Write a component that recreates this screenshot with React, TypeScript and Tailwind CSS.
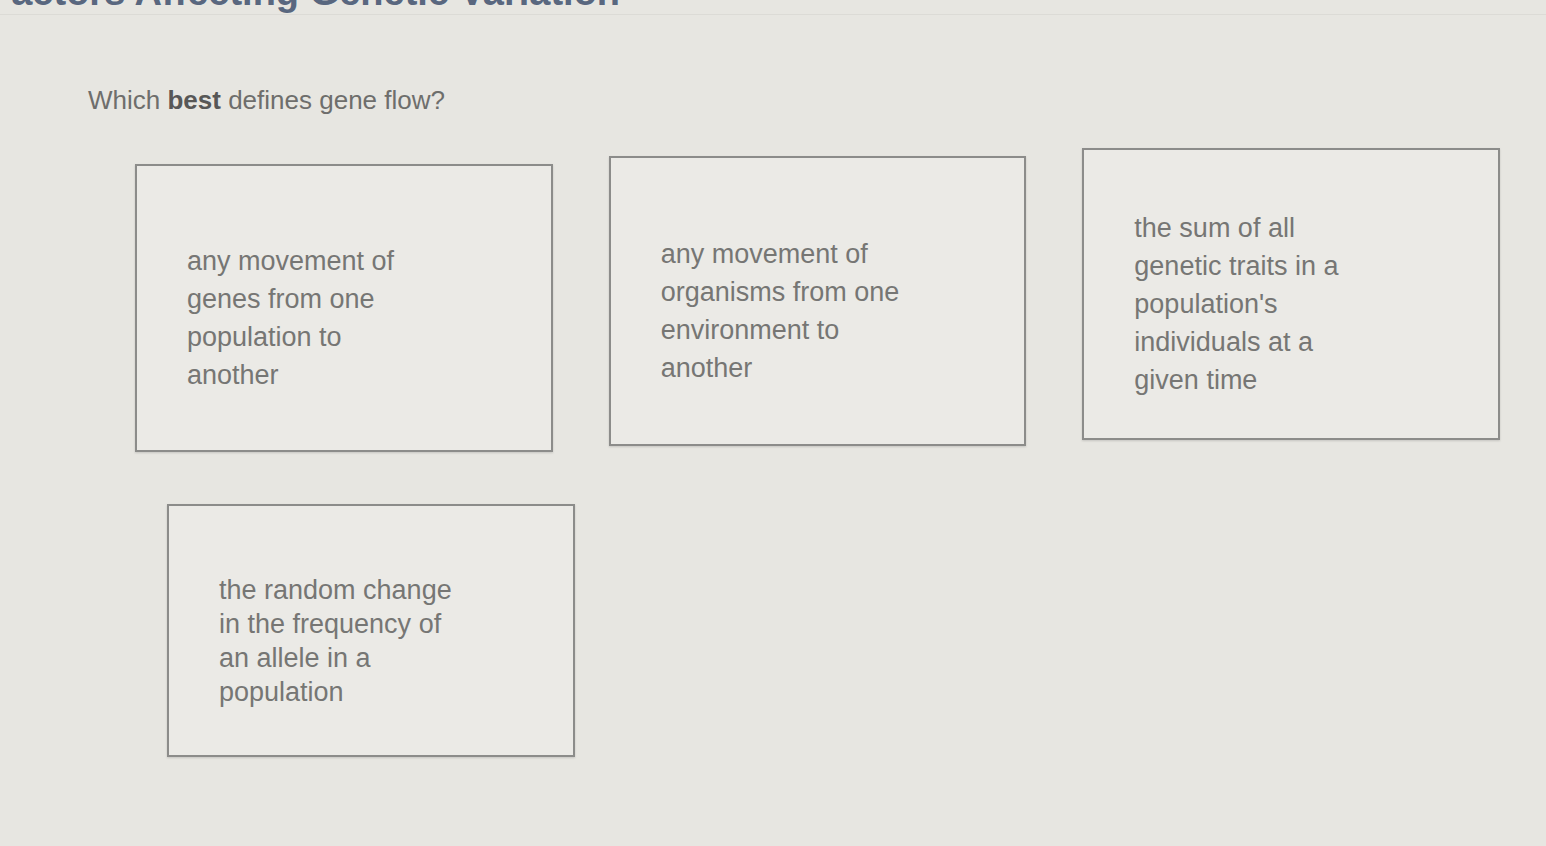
const choices = [
  ["any movement of", "genes from one", "population to", "another"],
  ["any movement of", "organisms from one", "environment to", "another"],
  ["the sum of all", "genetic traits in a", "population's", "individuals at a", "given time"],
  ["the random change", "in the frequency of", "an allele in a", "population"],
];

const Choice = ({ lines, className, leading = "leading-[38px]" }: { lines: string[]; className: string; leading?: string }) => {
  return (
    <button
      className={`flex items-center border-2 border-[#8c8c8a] bg-[#ebeae6] pt-[20px] pl-[50px] text-left shadow-[0_1px_2px_rgba(0,0,0,0.15)] ${className}`}
    >
      <span className={`text-[27px] text-[#767674] ${leading}`}>
        {lines.map((l) => (
          <span key={l} className="block">
            {l}
          </span>
        ))}
      </span>
    </button>
  );
};

export default function App() {
  return (
    <div
      className="h-[846px] w-full overflow-hidden bg-[#e7e6e1]"
      style={{ fontFamily: '"Liberation Sans", Arial, sans-serif' }}
    >
      <div className="flex items-end border-b border-[#dcdbd6]">
        <h1 className="-mt-[30px] -ml-[12px] text-[38px] font-bold leading-[44px] text-[#59677f]">
          Factors Affecting Genetic Variation
        </h1>
      </div>

      <p className="mt-[66px] ml-[88px] text-[26px] text-[#6e6e6c]">
        Which <span className="font-bold text-[#575756]">best</span> defines gene flow?
      </p>

      <div className="mt-[44px] ml-[135px] grid w-[1365px] grid-cols-3 gap-x-[56px] gap-y-[52px]">
        <Choice lines={choices[0]} className="h-[288px]" />
        <Choice lines={choices[1]} className="-mt-[8px] h-[290px]" />
        <Choice lines={choices[2]} className="-mt-[16px] h-[292px]" />
        <Choice lines={choices[3]} className="ml-[32px] h-[253px] w-[408px]" leading="leading-[34px]" />
      </div>
    </div>
  );
}
